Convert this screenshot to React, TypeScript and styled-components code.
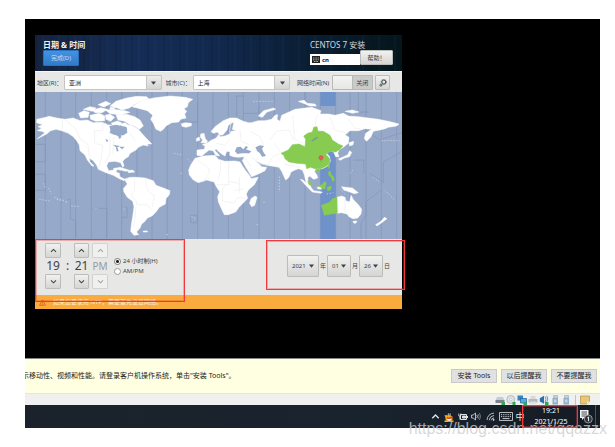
import React, { useState } from "react";
import styled, { createGlobalStyle, css } from "styled-components";

const GlobalStyle = createGlobalStyle`
  * { box-sizing: border-box; }
  body {
    margin: 0;
    background: #fff;
    font-family: "Noto Sans", "Noto Sans CJK SC", sans-serif;
    font-size: 6px;
    line-height: 10px;
    color: #3c4043;
  }
  button, select, input { font: inherit; color: inherit; margin: 0; }
  svg { display: block; flex: none; }
`;

const Page = styled.main`
  position: relative;
  padding: 19px 15px 19px 25px;
`;

const Desktop = styled.section`
  display: grid;
  grid-template-columns: 367fr 198fr;
  padding: 16px 0 49px 10px;
  background: #000;
  border-bottom: 1px solid #85888a;
`;

const Installer = styled.div`
  min-width: 0;
  background: #e7e7e5;
`;

const Header = styled.header`
  display: flex;
  justify-content: space-between;
  padding: 5px 9px 5px 8px;
  background:
    repeating-linear-gradient(90deg, rgba(0, 8, 30, 0.1) 0 2px, transparent 2px 7px, rgba(60, 110, 180, 0.05) 7px 9px, transparent 9px 16px),
    linear-gradient(90deg, #14233f 0%, #152d55 28%, #12294d 50%, #0b2036 72%, #04161b 100%);
`;

const HeaderSide = styled.div`
  display: flex;
  flex-direction: column;
  align-items: flex-start;
`;

const Title = styled.h1`
  margin: 0;
  font-size: 8px;
  line-height: 10px;
  font-weight: 700;
  color: #f1f4f7;
`;

const Product = styled.div`
  font-size: 8px;
  line-height: 10px;
  color: #d3dbe0;
`;

const DoneButton = styled.button`
  width: 36px;
  height: 16px;
  padding: 0;
  border: 1px solid #2b6fb9;
  border-radius: 1px;
  color: #c4ddf6;
  background: linear-gradient(#4392e2, #2f7acb);
`;

const raised = css`
  border: 1px solid #bcbcba;
  border-radius: 1px;
  background: linear-gradient(#f1f1f0, #d5d5d3);
`;

const KeyboardRow = styled.div`
  display: flex;
  align-items: flex-end;
`;

const LayoutBox = styled.button`
  display: flex;
  align-items: center;
  gap: 2px;
  width: 50px;
  height: 11px;
  padding: 0 2px;
  border: 0;
  background: #fff;
  color: #111;
  font-weight: 700;
`;

const HelpButton = styled.button`
  ${raised}
  width: 33px;
  height: 15px;
  padding: 0;
`;

const Toolbar = styled.div`
  display: flex;
  align-items: center;
  padding: 4px 12px 3px 2px;
  border-top: 1px solid #f6f6f4;
  height: 21px;
`;

const FieldLabel = styled.label<{ $wide?: boolean }>`
  flex: none;
  width: ${(p) => (p.$wide ? 35 : 27)}px;
  white-space: nowrap;
`;

const Gap = styled.span<{ $size: number }>`
  flex: none;
  width: ${(p) => p.$size}px;
`;

const Combo = styled.span`
  display: grid;
  grid-template-columns: 1fr 15px;
  flex: 1;
  min-width: 0;
  height: 15px;
  border: 1px solid #c4c4c2;
  border-radius: 1px;
  background: #fff;
`;

const BareSelect = styled.select`
  appearance: none;
  min-width: 0;
  width: 100%;
  padding: 0;
  border: 0;
  outline: 0;
  background: transparent;
`;

const ComboSelect = styled(BareSelect)`
  padding-left: 4px;
  color: #222;
`;

const ComboArrow = styled.span`
  display: flex;
  align-items: center;
  justify-content: center;
  pointer-events: none;
  border-left: 1px solid #c4c4c2;
  background: linear-gradient(#ededec, #d4d4d2);
`;

const Switch = styled.button`
  display: grid;
  grid-template-columns: 1fr 1fr;
  align-items: center;
  width: 41px;
  height: 15px;
  padding: 0;
  border: 1px solid #b9b9b7;
  border-radius: 1px;
  background: #cacac8;
`;

const Knob = styled.span<{ $on: boolean }>`
  order: ${(p) => (p.$on ? 2 : 0)};
  height: 13px;
  border-right: 1px solid #b9b9b7;
  background: linear-gradient(#f4f4f3, #e6e6e4);
`;

const SwitchText = styled.span`
  order: 1;
  text-align: center;
  white-space: nowrap;
`;

const GearButton = styled.button`
  ${raised}
  display: flex;
  align-items: center;
  justify-content: center;
  width: 15px;
  height: 15px;
  padding: 0;
`;

const MapArt = styled.svg`
  width: 100%;
  height: auto;
`;

const Controls = styled.div`
  position: relative;
  display: flex;
  align-items: center;
  justify-content: space-between;
  padding: 4px 12px 6px 10px;
`;

const Cluster = styled.div`
  display: flex;
  align-items: center;
`;

const Clock = styled.div`
  display: grid;
  grid-template-columns: 16px 13px 15px 3px 16px;
  grid-template-rows: 15px 16px 15px;
  align-items: center;
  justify-items: center;
`;

const StepButton = styled.button<{ $col: number; $row: number }>`
  ${raised}
  grid-column: ${(p) => p.$col};
  grid-row: ${(p) => p.$row};
  display: flex;
  align-items: center;
  justify-content: center;
  width: 100%;
  height: 15px;
  padding: 0;
  color: #3e4446;
  &:disabled {
    color: #a2a4a4;
    background: #f0f0ee;
    border-color: #d2d2d0;
  }
`;

const Digits = styled.span<{ $col: number; $dim?: boolean }>`
  grid-column: ${(p) => p.$col};
  grid-row: 2;
  font-size: ${(p) => (p.$dim ? 10 : 12)}px;
  line-height: 16px;
  color: ${(p) => (p.$dim ? "#989a9a" : "#3e4446")};
`;

const Modes = styled.div`
  margin-left: 6px;
`;

const Mode = styled.label`
  display: flex;
  align-items: center;
  gap: 2px;
  height: 10px;
  white-space: nowrap;
`;

const Radio = styled.input`
  appearance: none;
  width: 7px;
  height: 7px;
  border: 1px solid #9b9c9c;
  border-radius: 50%;
  background: #fff;
  &:checked {
    background: radial-gradient(circle, #222 0 1px, #fff 2px);
    border-color: #777;
  }
`;

const DateField = styled.label`
  display: flex;
  align-items: center;
  gap: 1px;
  margin-left: 1px;
`;

const DateCombo = styled.span<{ $wide?: boolean }>`
  ${raised}
  display: flex;
  align-items: center;
  width: ${(p) => (p.$wide ? 32 : 24)}px;
  height: 22px;
  padding: 0 4px;
`;

const Notice = styled.div`
  display: flex;
  align-items: center;
  gap: 7px;
  height: 14px;
  padding: 0 4px;
  color: #fff0d8;
  background: #f9ac3d;
`;

const Marker = styled.span<{ $top: number; $bottom: number; $left: string; $right: string }>`
  position: absolute;
  z-index: 1;
  top: ${(p) => p.$top}px;
  bottom: ${(p) => p.$bottom}px;
  left: ${(p) => p.$left};
  right: ${(p) => p.$right};
  border: 1px solid #f5383b;
  box-shadow: inset 0 0 0 1px rgba(245, 56, 59, 0.35);
  pointer-events: none;
`;

const ToolsBar = styled.section`
  display: flex;
  align-items: center;
  justify-content: space-between;
  height: 34px;
  padding-right: 3px;
  overflow: hidden;
  font-size: 7px;
  color: #222;
  background: #ffffe1;
`;

const Message = styled.p`
  margin: 0;
  text-indent: -3px;
  white-space: nowrap;
`;

const ToolsActions = styled.div`
  display: flex;
  gap: 4px;
`;

const ToolsButton = styled.button`
  width: 46px;
  height: 14px;
  padding: 0;
  border: 1px solid #c9c9c9;
  background: #e1e1e1;
  white-space: nowrap;
`;

const StatusBar = styled.div`
  display: flex;
  align-items: center;
  justify-content: flex-end;
  gap: 1px;
  height: 12px;
  padding-right: 10px;
  border-top: 1px solid #e3e7df;
  background: #f0f0f0;
`;

const Divider = styled.span`
  width: 1px;
  height: 10px;
  margin: 0 3px;
  background: #c4c4c4;
`;

const Taskbar = styled.footer`
  display: flex;
  justify-content: flex-end;
  align-items: stretch;
  height: 23px;
  color: #fff;
  background: linear-gradient(90deg, #1b222b, #19232e 60%, #151b24);
`;

const Tray = styled.button<{ $w: number }>`
  display: flex;
  align-items: center;
  justify-content: center;
  width: ${(p) => p.$w}px;
  padding: 0;
  border: 0;
  font-size: 9px;
  background: transparent;
  color: #dfe2e5;
`;

const TaskClock = styled.div`
  position: relative;
  display: flex;
  flex-direction: column;
  justify-content: space-between;
  width: 52px;
  padding: 1px 0 1px;
  font-size: 7px;
  line-height: 10px;
  text-align: center;
`;

const ShowDesktop = styled.button`
  width: 5px;
  padding: 0;
  border: 0;
  border-left: 1px solid #4b525b;
  background: transparent;
`;

const Watermark = styled.div`
  position: absolute;
  right: 8px;
  bottom: 9px;
  font: 16px/18px "Liberation Sans", sans-serif;
  color: rgba(205, 205, 205, 0.78);
  pointer-events: none;
`;

const Triangle = () => (
  <svg width="5" height="4" viewBox="0 0 5 4" aria-hidden="true">
    <path d="M0 .4h5L2.5 3.7z" fill="#3e4446" />
  </svg>
);

const Chevron = ({ down, size = 7 }: { down?: boolean; size?: number }) => (
  <svg width={size} height={size} viewBox="0 0 7 7" fill="none" stroke="currentColor" strokeWidth="1.1" aria-hidden="true">
    <path d={down ? "M1 2.4 3.5 4.8 6 2.4" : "M1 4.8 3.5 2.4 6 4.8"} />
  </svg>
);

const SEA = "#96a9c9";

const zoneLines = [46, 93, 137, 184, 230, 275, 321, 366, 412, 457, 503, 549, 595, 640, 687, 733, 779, 825, 871, 917, 960, 1008, 1054, 1100];

const americas = [
  "M20 88 38 84 58 79 80 84 105 88 130 84 150 92 172 90 190 98 215 97 232 103 248 98 262 93 275 98 270 108 255 112 242 118 238 128 250 134 262 136 268 148 275 142 272 134 288 130 290 118 285 106 300 104 315 112 325 118 335 130 345 140 352 150 362 160 350 160 355 168 340 165 325 172 318 180 300 190 295 200 285 206 278 214 282 228 278 232 272 218 255 214 235 216 230 228 236 242 250 240 255 234 262 236 258 246 268 250 270 260 285 268 282 272 268 266 250 256 228 248 205 238 200 226 190 212 178 205 180 215 192 228 186 228 172 210 165 195 150 182 148 165 140 152 130 140 115 130 95 122 78 118 62 122 50 132 22 146 45 128 35 124 22 122 35 115 24 110 38 104 20 98Z",
  "M306 50 318 42 335 32 370 24 420 18 465 22 488 28 475 38 472 50 462 56 470 64 464 72 468 84 452 88 446 96 425 98 408 108 400 118 392 124 378 118 370 100 362 88 368 76 352 62 330 56Z",
  "M454 101 466 98 484 100 484 107 468 112 456 109Z",
  "M283 268 300 262 320 262 345 264 370 272 378 286 400 294 420 302 418 314 408 326 406 342 388 352 378 366 366 378 352 384 345 394 335 402 330 414 320 426 326 434 312 436 302 424 304 404 308 380 312 350 308 334 292 322 282 306 280 296 292 282Z",
  "M240 48 258 34 290 24 320 19 350 20 356 26 332 34 312 44 298 54 276 60 262 54Z",
  "M258 74 290 73 314 80 330 90 340 108 328 118 312 108 296 102 284 94 264 90Z",
  "M180 76 208 70 224 78 224 92 198 94 182 88Z",
  "M146 70 162 62 178 67 174 82 152 84Z",
  "M160 58 180 50 198 54 186 64Z",
  "M186 61 212 53 232 58 216 68 196 68Z",
  "M204 44 228 34 242 41 222 51Z",
  "M226 60 250 58 284 62 300 67 272 74 240 71Z",
  "M226 75 240 73 254 82 242 94 228 88Z",
  "M270 102 286 98 294 106 278 110Z",
  "M240 52 256 53 252 58 240 57Z",
  "M342 148 350 146 365 162 350 162Z",
  "M250 236 270 232 296 240 288 244 270 240Z",
  "M292 242 308 240 314 246 296 248Z",
  "M340 423h12v3h-12z",
  "M512 132 522 130 526 146 533 154 528 159 513 158 518 150 511 142Z",
  "M499 146 507 141 510 150 500 154Z",
];

const oldWorld = [
  "M-60 205-35 198 0 196 10 208 30 214 60 213 75 216 92 242 105 258 108 266 130 262 118 284 100 300 94 312 98 325 84 340 72 352 62 366 40 374 28 374 20 358 10 335 8 320 14 305 5 292-3 276-25 270-50 278-65 270-77 255-79 240-73 225Z",
  "M108 326 120 318 126 322 119 346 110 350 104 340Z",
  "M-12 125 0 110 25 92 45 84 65 84 82 93 68 99 52 98 40 106 36 120 24 134 14 136 8 126-4 130Z",
  "M-54 180-32 178-30 168-38 164-22 158-10 150 4 144 10 134 16 140 30 138 44 132 48 124 64 122 52 118 56 100 62 90 82 93 100 98 110 98 130 92 150 92 170 88 180 76 188 74 186 88 195 94 200 76 222 66 240 58 270 54 290 52 318 62 315 72 340 72 360 76 385 70 400 78 430 80 460 84 490 88 520 94 552 102 545 108 520 112 510 116 495 120 475 124 468 140 455 154 448 146 452 130 470 118 450 116 430 122 405 122 390 134 402 142 400 160 385 172 372 180 368 190 372 200 362 200 356 186 345 182 335 190 344 200 346 215 338 228 322 236 305 238 298 244 306 256 308 264 296 268 284 258 278 264 282 282 288 290 280 292 272 274 268 254 262 240 250 236 240 240 228 246 222 262 212 270 200 244 192 232 170 228 155 226 138 220 120 212 132 222 140 230 155 232 150 242 130 252 110 260 100 244 88 224 82 212 88 200 70 202 55 200 44 196 45 186 35 184 30 198 20 192 10 184 5 178-2 180 8 190 14 198 2 196-6 182-18 180-28 188-40 198-54 196Z",
  "M130 78 146 62 176 54 182 58 156 66 142 82Z",
  "M250 34 268 31 276 40 300 42 304 48 284 48 270 42Z",
  "M370 207 386 200 398 194 404 182 410 187 404 200 388 204 376 211Z",
  "M402 158 416 154 414 164 404 168Z",
  "M366 322 380 318 390 322 392 332 404 336 408 316 416 330 430 344 440 358 438 372 428 384 414 386 402 380 396 372 380 368 366 370Z",
  "M414 394 426 393 422 400 416 399Z",
  "M508 382 516 386 500 398 486 408 482 404 498 394Z",
  "M380 290 392 292 412 294 430 308 418 311 398 304 386 300Z",
  "M256 268 264 270 288 292 296 302 322 306 318 310 292 306 274 288Z",
  "M390 64 412 60 432 66 412 70Z",
  "M306 290 322 288 320 298 308 296Z",
];

const waters = [
  "M615 184 620 172 632 170 640 178 648 168 654 172 648 178 664 184 658 190 636 190 622 192Z",
  "M676 172 690 166 702 168 696 176 700 186 708 198 696 200 690 190 682 184Z",
  "M248 164 270 168 262 172 266 184 260 184 258 172Z",
  "M268 170 284 170 276 178Z",
  "M226 146 236 152 230 156Z",
  "M238 108 258 104 290 112 292 128 280 136 264 138 244 130Z",
  "M230 96 242 96 246 104 232 104Z",
];

const greens = [
  "M198 190 220 180 232 164 252 162 270 170 272 148 266 138 278 130 292 126 296 112 306 110 309 124 325 124 345 136 352 150 370 162 384 168 375 178 362 186 345 184 332 192 344 206 345 218 335 228 318 236 300 236 286 232 275 236 272 222 245 220 222 216 210 206 206 196Z",
  "M319 346 345 336 352 326 366 322 367 370 348 372 328 376Z",
  "M306 290 320 284 330 274 334 280 330 296 320 296 316 290Z",
  "M337 292 346 288 350 292 346 300 338 302Z",
  "M340 246 346 244 348 254 356 260 358 272 352 274 350 264 342 256Z",
  "M278 272 286 274 290 286 282 284Z",
  "M302 238 312 238 310 244 304 244Z",
  "M338 228 344 226 342 236Z",
];

const WorldMap = () => (
  <MapArt viewBox="15 6 1101 441" role="img" aria-label="时区地图">
    <rect x="15" y="6" width="1101" height="441" fill={SEA} />
    <g stroke="#8396b8" strokeWidth="2" fill="none">
      {zoneLines.map((x) => (
        <path key={x} d={`M${x} 6V447`} />
      ))}
      <path d="M15 163h31v52H15M15 253h31v48H15M93 337l28-10v60l16 5v49M193 355h37v85M275 352h16v30h-16M412 6v60h45M457 96h46v-60M482 376h20v22h-20zM640 18h-20v100M640 70h46v-20M1020 250l40 28v-62l56-32M1008 120l40 30 68-22M1054 300l-46 35v40l-15 25v47M971 210h30v40M825 6v42M985 6v60h30" />
    </g>
    <g fill="#6e92c9">
      <rect x="871" y="6" width="46" height="42" />
      <rect x="871" y="180" width="46" height="267" />
    </g>
    <g fill="#fff" stroke="#fff" strokeWidth="1.5" strokeLinejoin="bevel">
      {americas.map((d) => (
        <path key={d} d={d} />
      ))}
    </g>
    <g transform="translate(555 0)" strokeLinejoin="bevel">
      <g fill="#fff" stroke="#fff" strokeWidth="1.5">
        {oldWorld.map((d) => (
          <path key={d} d={d} />
        ))}
      </g>
    </g>
    <g fill={SEA}>
      {waters.map((d) => (
        <path key={d} d={d} />
      ))}
    </g>
    <g fill="none" stroke="#ededed" strokeWidth="2">
      <path d="M97 86v34M107 90l30 26 14 32 22 14 6 44M218 98v24h-24v38l24 6-4 40-8 28M240 138v52l-14 28M252 140l-4 50M300 130l16 24M314 270v30l-10 16 16 18v10h30l14 14M345 268l10 36 18 12-6 34M318 350l-6 60" />
      <path d="M503 212l30 18 6 18-20 28M572 210v30l-8 30M596 214v60l30 6M600 275l-22 18v40l34 6 10-16 24 2M628 262v46M560 284h40M640 296l-28 6" />
      <path d="M604 92l-6 36M630 120l4 34 24 10M660 124l30 16 12 28M720 150l18-26 40-4 12 30M733 160l22 30M788 78l6 70 26 12M862 74l-8 40 26 12M900 80l14 40 40 10M955 86l20 30 16 0M560 160l26 6 14-20M645 206l18 24M664 200l26 22 24 2 14-22M728 200l22-10" />
      <path d="M945 322v48M762 222l48 10" />
    </g>
    <g transform="translate(555 0)">
      <g fill="#87cb51" stroke="#87cb51" strokeWidth="1.5" strokeLinejoin="bevel">
        {greens.map((d) => (
          <path key={d} d={d} />
        ))}
      </g>
      <path d="M288 152l18-12 4 2-16 12z" fill="#7396a5" />
      <circle cx="318" cy="203" r="6" fill="#ef5b55" stroke="#c2433b" strokeWidth="1.5" />
      <path d="M318 210v6" stroke="#7b8f55" strokeWidth="2" />
    </g>
    <g stroke="#c3d0e2" strokeWidth="3" strokeDasharray="4 5" fill="none">
      <path d="M28 328l36 6M72 322l44 14M80 328l34 10M124 348l26 2M40 280l6 14M56 294l8 18M282 352v10M432 190l22 4M472 206l12 12M452 250h8M670 34h58M748 260v46M960 250l10-12M1030 262l20 14M1064 300l30 30M1054 152h56M932 298l14 14M890 312l20-4M700 336h6M680 404h6M484 380l14 6M410 434h8M196 355h10" />
    </g>
  </MapArt>
);

const DriveIcon = ({ kind }: { kind: string }) => (
  <svg width="10" height="10" viewBox="0 0 10 10" aria-hidden="true">
    {kind === "disk" && (
      <>
        <path d="M2 2h6l1.5 3.5H.5z" fill="#c8ccd0" />
        <path d="M.5 5h9v3h-9z" fill="#7d858c" />
        <path d="M6.5 7.2H10V10H6.5z" fill="#2fa84f" />
      </>
    )}
    {kind === "cd" && (
      <>
        <circle cx="4.8" cy="4.5" r="4" fill="#dfe3e6" stroke="#9fa6ab" strokeWidth=".7" />
        <circle cx="4.8" cy="4.5" r="1.2" fill="#fff" stroke="#9fa6ab" strokeWidth=".5" />
        <path d="M6.5 7H9.5v3h-3z" fill="#2fa84f" />
      </>
    )}
    {kind === "net" && (
      <>
        <path d="M.5.5h5.5v5H.5z" fill="#2f86c7" />
        <path d="M3.5 3.5h6v4.5h-6z" fill="#58a9dd" stroke="#1f5e92" strokeWidth=".7" />
        <path d="M6.5 7.5H10V10H6.5z" fill="#2fa84f" />
      </>
    )}
    {kind === "printer" && (
      <>
        <path d="M2.5 1h5v3h-5z" fill="#d6d8da" />
        <path d="M.5 4h9v3.5h-9z" fill="#b4b8bb" />
        <path d="M2 6.5h6V9H2z" fill="#dfe0e2" />
      </>
    )}
    {kind === "sound" && (
      <>
        <path d="M.8 3.2 5 .7v8L.8 6.5z" fill="#2c6fa8" />
        <path d="M6 1.5q2 2.8 0 6M7.8.8q2 3.5 0 6" fill="none" stroke="#4a94c9" strokeWidth=".9" />
        <path d="M6 7h3.5v3H6z" fill="#2fa84f" />
      </>
    )}
    {kind === "usb" && (
      <>
        <path d="M3.5.5h4v2.5h-4z" fill="#c9d2d9" stroke="#91a1ad" strokeWidth=".5" />
        <path d="M2.5 3h5.5v6.5H2.5z" fill="#8fb0cb" />
        <path d="M4 4.5h2.5v3H4z" fill="#c4d7e6" />
      </>
    )}
    {kind === "note" && (
      <>
        <path d="M.5 1h9v5.5L7 9H.5z" fill="#e9c776" stroke="#b0924d" strokeWidth=".7" />
        <path d="M7 9V6.5h2.5z" fill="#fff1c4" />
      </>
    )}
  </svg>
);

const statusIcons = ["disk", "cd", "net", "printer", "sound", "usb", "usb"];

export default function App() {
  const [netTime, setNetTime] = useState(false);
  return (
    <>
      <GlobalStyle />
      <Page>
        <Desktop>
          <Installer>
            <Header>
              <HeaderSide>
                <Title>日期 &amp; 时间</Title>
                <DoneButton>完成(D)</DoneButton>
              </HeaderSide>
              <HeaderSide>
                <Product>CENTOS 7 安装</Product>
                <KeyboardRow>
                  <LayoutBox>
                    <svg width="8" height="7" viewBox="0 0 8 7" aria-hidden="true">
                      <path d="M0 0h8v7H0z" fill="#222" />
                      <path d="M1 2h6M1 3.8h6M2 5.5h4" stroke="#ddd" strokeWidth=".8" strokeDasharray="1 .6" />
                    </svg>
                    cn
                  </LayoutBox>
                  <HelpButton>帮助！</HelpButton>
                </KeyboardRow>
              </HeaderSide>
            </Header>
            <Toolbar>
              <FieldLabel htmlFor="region">地区(R)：</FieldLabel>
              <Combo>
                <ComboSelect id="region">
                  <option>亚洲</option>
                </ComboSelect>
                <ComboArrow><Triangle /></ComboArrow>
              </Combo>
              <Gap $size={4} />
              <FieldLabel htmlFor="city">城市(C)：</FieldLabel>
              <Combo>
                <ComboSelect id="city">
                  <option>上海</option>
                </ComboSelect>
                <ComboArrow><Triangle /></ComboArrow>
              </Combo>
              <Gap $size={7} />
              <FieldLabel $wide htmlFor="nettime">网络时间(N)</FieldLabel>
              <Switch id="nettime" role="switch" aria-checked={netTime} onClick={() => setNetTime(!netTime)}>
                <Knob $on={netTime} />
                <SwitchText>{netTime ? "打开" : "关闭"}</SwitchText>
              </Switch>
              <Gap $size={2} />
              <GearButton aria-label="配置 NTP">
                <svg width="8" height="8" viewBox="0 0 8 8" fill="none" stroke="#3e4446" aria-hidden="true">
                  <circle cx="4.8" cy="3" r="2" strokeWidth="1" />
                  <circle cx="4.8" cy="3" r="2.8" strokeWidth=".6" strokeDasharray=".9 .9" />
                  <circle cx="1.9" cy="6.2" r="1" strokeWidth=".9" />
                </svg>
              </GearButton>
            </Toolbar>
            <WorldMap />
            <Controls>
              <Marker $top={0} $bottom={-7} $left="0" $right="59%" />
              <Marker $top={1} $bottom={5} $left="63%" $right="-3px" />
              <Cluster>
                <Clock>
                  <StepButton $col={1} $row={1} aria-label="增加小时"><Chevron /></StepButton>
                  <StepButton $col={3} $row={1} aria-label="增加分钟"><Chevron /></StepButton>
                  <StepButton $col={5} $row={1} disabled aria-label="上午"><Chevron /></StepButton>
                  <Digits $col={1}>19</Digits>
                  <Digits $col={2}>:</Digits>
                  <Digits $col={3}>21</Digits>
                  <Digits $col={5} $dim>PM</Digits>
                  <StepButton $col={1} $row={3} aria-label="减少小时"><Chevron down /></StepButton>
                  <StepButton $col={3} $row={3} aria-label="减少分钟"><Chevron down /></StepButton>
                  <StepButton $col={5} $row={3} disabled aria-label="下午"><Chevron down /></StepButton>
                </Clock>
                <Modes>
                  <Mode><Radio type="radio" name="mode" defaultChecked />24 小时制(H)</Mode>
                  <Mode><Radio type="radio" name="mode" />AM/PM</Mode>
                </Modes>
              </Cluster>
              <Cluster>
                <DateField>
                  <DateCombo $wide>
                    <BareSelect><option>2021</option></BareSelect>
                    <Triangle />
                  </DateCombo>
                  年
                </DateField>
                <DateField>
                  <DateCombo>
                    <BareSelect><option>01</option></BareSelect>
                    <Triangle />
                  </DateCombo>
                  月
                </DateField>
                <DateField>
                  <DateCombo>
                    <BareSelect><option>26</option></BareSelect>
                    <Triangle />
                  </DateCombo>
                  日
                </DateField>
              </Cluster>
            </Controls>
            <Notice>
              <svg width="7" height="7" viewBox="0 0 7 7" aria-hidden="true">
                <path d="M3.5.8 6.4 6.3H.6z" fill="#f7a13a" stroke="#dc6c16" strokeWidth=".9" />
                <path d="M3.5 2.6v1.8M3.5 5v.7" stroke="#dc6c16" strokeWidth=".8" />
              </svg>
              如果您要使用 NTP，需要首先设置网络。
            </Notice>
          </Installer>
        </Desktop>
        <ToolsBar>
          <Message>示移动性、视频和性能。请登录客户机操作系统，单击"安装 Tools"。</Message>
          <ToolsActions>
            <ToolsButton>安装 Tools</ToolsButton>
            <ToolsButton>以后提醒我</ToolsButton>
            <ToolsButton>不要提醒我</ToolsButton>
          </ToolsActions>
        </ToolsBar>
        <StatusBar>
          {statusIcons.map((kind, i) => (
            <DriveIcon key={i} kind={kind} />
          ))}
          <Divider />
          <DriveIcon kind="note" />
        </StatusBar>
        <Taskbar>
          <Tray $w={14} aria-label="显示隐藏的图标"><Chevron size={9} /></Tray>
          <Tray $w={14} aria-label="QQ">
            <svg width="10" height="10" viewBox="0 0 10 10" aria-hidden="true">
              <ellipse cx="5.2" cy="3" rx="2.5" ry="2.8" fill="#1b1b1b" />
              <ellipse cx="5" cy="6.5" rx="3.6" ry="3.2" fill="#e8a51d" />
              <ellipse cx="5.2" cy="7" rx="2" ry="2.2" fill="#fff" />
              <path d="M1.5 4.3q3.5 2 7 0l.3 1.6Q5 8 1.4 5.9z" fill="#e03a2c" />
              <path d="M3 3.2h4.2L5.2 4.7zM.5 8.5h4v1.5h-4zM5.5 8.5h4v1.5h-4zM.3 3.5 3 3v4z" fill="#f5b21b" />
              <path d="M3.8 1.4h1v1.3h-1zM5.6 1.4h1v1.3h-1z" fill="#fff" />
            </svg>
          </Tray>
          <Tray $w={13} aria-label="电池">
            <svg width="10" height="8" viewBox="0 0 10 8" fill="none" stroke="currentColor" aria-hidden="true">
              <path d="M2.5 1.5h6v5h-6zM9.5 3v2" />
              <path d="M4.5 3h3v2h-3z" fill="currentColor" />
              <path d="M.8.5v2.5h2V.5M1.8 3v3.5" strokeWidth=".8" />
            </svg>
          </Tray>
          <Tray $w={14} aria-label="音量">
            <svg width="10" height="9" viewBox="0 0 10 9" fill="none" stroke="currentColor" strokeWidth=".8" aria-hidden="true">
              <path d="M.6 3h1.6L4.5 1v7L2.2 6H.6zM5.8 3q1 1.5 0 3" />
              <path d="M7 2q2 2.5 0 5M8.4 1q2.4 3.5 0 7" opacity=".55" />
            </svg>
          </Tray>
          <Tray $w={14} aria-label="网络">
            <svg width="9" height="9" viewBox="0 0 9 9" fill="none" stroke="currentColor" strokeWidth=".8" aria-hidden="true">
              <path d="M1 8Q1.5 2 8 1M3.2 8.2Q3.6 4.2 8 3.4M5.4 8.3Q5.6 6.2 8 5.8" />
              <circle cx="7.6" cy="7.8" r=".6" fill="currentColor" />
            </svg>
          </Tray>
          <Tray $w={18} aria-label="触摸键盘">
            <svg width="14" height="9" viewBox="0 0 14 9" fill="none" stroke="currentColor" aria-hidden="true">
              <path d="M.5.5h13v8H.5z" strokeWidth=".8" />
              <path d="M2 2.7h10M2 4.6h10" strokeDasharray="1 .8" strokeWidth=".9" />
              <path d="M3.5 6.6h7" strokeWidth=".9" />
            </svg>
          </Tray>
          <Tray $w={10}>中</Tray>
          <TaskClock>
            <Marker $top={0} $bottom={0} $left="-3px" $right="-1px" />
            <span>19:21</span>
            <span>2021/1/25</span>
          </TaskClock>
          <Tray $w={18} aria-label="通知">
            <svg width="14" height="15" viewBox="0 0 14 15" aria-hidden="true">
              <path d="M1 1h8.5v8H5L3 11V9H1z" fill="#f2f2f2" />
              <path d="M2.5 3h5.5M2.5 5h5.5M2.5 7h4" stroke="#1a222c" strokeWidth=".8" />
              <circle cx="9.3" cy="10" r="4" fill="#30363d" stroke="#a7abaf" strokeWidth=".8" />
              <path d="M8.4 8.8l1.1-.8v4.2" stroke="#fff" fill="none" strokeWidth=".9" />
            </svg>
          </Tray>
          <ShowDesktop aria-label="显示桌面" />
        </Taskbar>
        <Watermark>https://blog.csdn.net/qqazzx</Watermark>
      </Page>
    </>
  );
}
